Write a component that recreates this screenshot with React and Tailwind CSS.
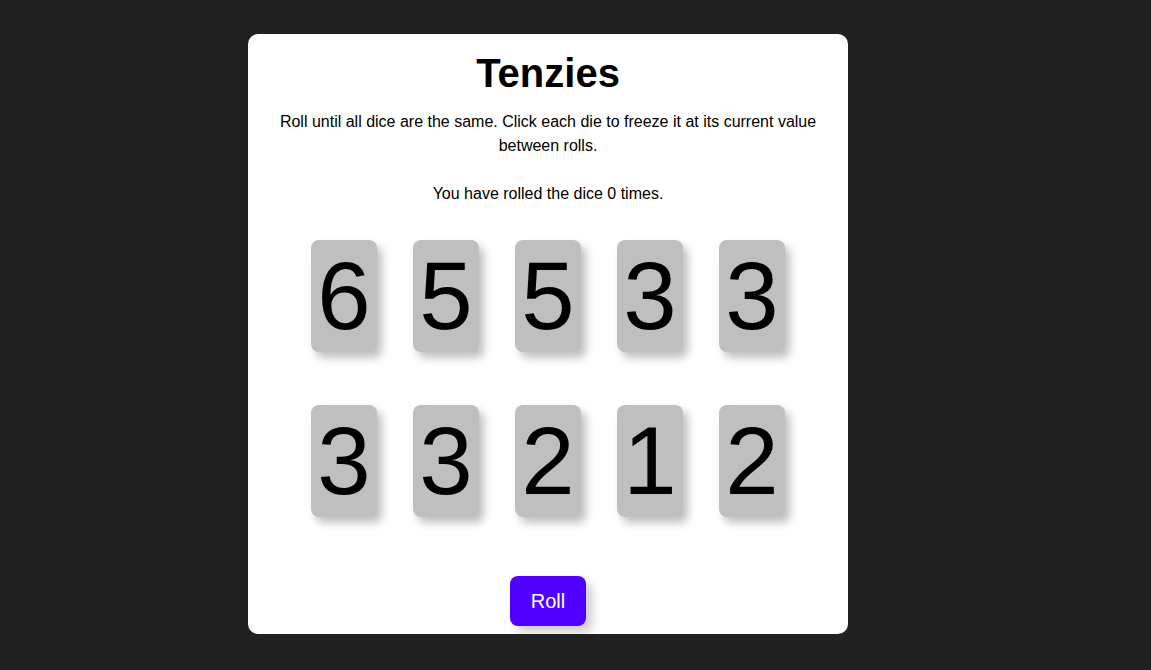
import React, { useState } from "react";

const start = [6, 5, 5, 3, 3, 3, 3, 2, 1, 2];

const Die = ({ value, held, onClick }) => (
  <button
    onClick={onClick}
    className={`w-[66px] h-[112px] rounded-[8px] flex items-center justify-center text-[96px] leading-none text-black shadow-[5px_6px_8px_rgba(0,0,0,0.25)] ${
      held ? "bg-[#59e391]" : "bg-[#bfbfbf]"
    }`}
  >
    {value}
  </button>
);

export default function App() {
  const [dice, setDice] = useState(start.map((v) => ({ value: v, held: false })));
  const [rolls, setRolls] = useState(0);

  const roll = () => {
    setDice((d) => d.map((x) => (x.held ? x : { ...x, value: Math.ceil(Math.random() * 6) })));
    setRolls((r) => r + 1);
  };

  return (
    <div
      className="min-h-[670px] bg-[#212121] pt-[34px]"
      style={{ fontFamily: '"Liberation Sans", Arial, sans-serif' }}
    >
      <main className="ml-[248px] w-[600px] h-[600px] bg-white rounded-[10px] flex flex-col items-center">
        <h1 className="mt-[15px] text-[40px] leading-[48px] font-bold text-black">Tenzies</h1>
        <p className="mt-[13px] px-[30px] text-center text-[16px] leading-[24px] text-black">
          Roll until all dice are the same. Click each die to freeze it at its current value between rolls.
        </p>
        <p className="mt-[24px] text-[16px] leading-[24px] text-black">
          You have rolled the dice {rolls} times.
        </p>
        <div className="mt-[34px] grid grid-cols-5 gap-x-[36px] gap-y-[53px]">
          {dice.map((d, i) => (
            <Die
              key={i}
              value={d.value}
              held={d.held}
              onClick={() =>
                setDice((all) => all.map((x, j) => (j === i ? { ...x, held: !x.held } : x)))
              }
            />
          ))}
        </div>
        <button
          onClick={roll}
          className="mt-[59px] w-[76px] h-[50px] rounded-[8px] bg-[#5000ff] text-white text-[20px] shadow-[6px_6px_10px_rgba(0,0,0,0.2)]"
        >
          Roll
        </button>
      </main>
    </div>
  );
}
